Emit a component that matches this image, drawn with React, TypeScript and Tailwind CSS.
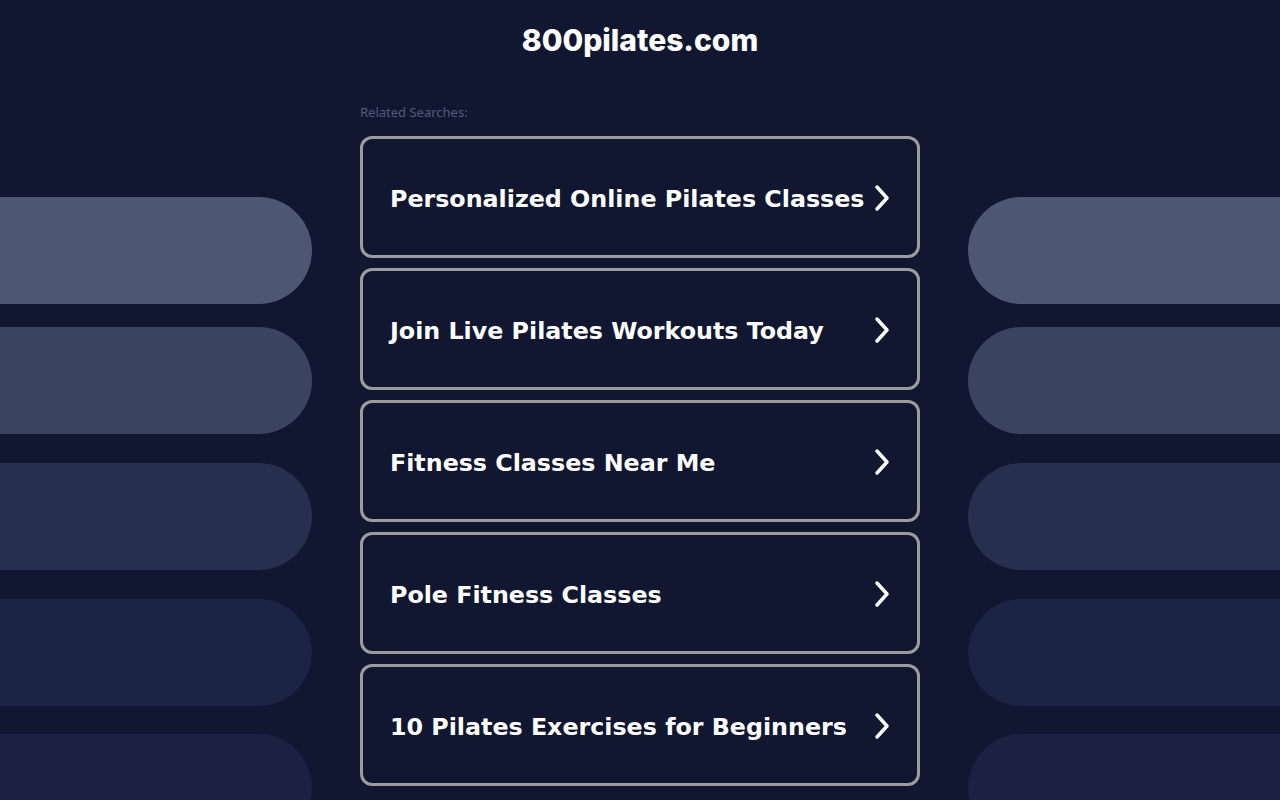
import { ReactNode } from 'react'

const searches = [
  'Personalized Online Pilates Classes',
  'Join Live Pilates Workouts Today',
  'Fitness Classes Near Me',
  'Pole Fitness Classes',
  '10 Pilates Exercises for Beginners',
]

// decorative side pills, top to bottom
const pills = [
  { bg: 'bg-[#4d5773]', mt: 'mt-[197px]' },
  { bg: 'bg-[#3a4360]', mt: 'mt-[23px]' },
  { bg: 'bg-[#262f4d]', mt: 'mt-[29px]' },
  { bg: 'bg-[#1c2445]', mt: 'mt-[29px]' },
  { bg: 'bg-[#1a2142]', mt: 'mt-[28px]' },
]

function SideColumn({ side }: { side: 'left' | 'right' }) {
  return (
    <div className="flex w-[312px] shrink-0 flex-col">
      {pills.map((p, i) => (
        <div
          key={i}
          className={`${p.mt} ${p.bg} h-[107px] w-full shrink-0 ${
            side === 'left' ? 'rounded-r-full' : 'rounded-l-full'
          }`}
        />
      ))}
    </div>
  )
}

function Chevron() {
  return (
    <svg width="20" height="30" viewBox="0 0 20 30" fill="none" className="mt-[2px] shrink-0">
      <polyline
        points="5,4 15,15 5,26"
        stroke="white"
        strokeWidth="3.5"
        strokeLinecap="round"
        strokeLinejoin="round"
      />
    </svg>
  )
}

function SearchLink({ children }: { children: ReactNode }) {
  return (
    <a
      href="#"
      className="flex h-[122px] items-center justify-between rounded-[12px] border-[3px] border-[#9c9c9c] pl-[27px] pr-[25px] text-white"
    >
      <span className="whitespace-nowrap pt-[5px] text-[23.75px] font-bold [font-family:'DejaVu_Sans',Verdana,sans-serif]">
        {children}
      </span>
      <Chevron />
    </a>
  )
}

export default function App() {
  return (
    <div className="flex h-[800px] w-full justify-between overflow-hidden bg-[#111730]">
      <SideColumn side="left" />

      <main className="flex w-[560px] shrink-0 flex-col">
        <h1 className="pt-[20px] text-center text-[30px] leading-[40px] font-extrabold text-white [font-family:Inter,'Noto_Sans',sans-serif]">
          800pilates.com
        </h1>
        <p className="mt-[43px] text-[13px] leading-[18px] text-[#515b7b] [font-family:'Noto_Sans',Arial,sans-serif]">
          Related Searches:
        </p>
        <div className="mt-[15px] flex flex-col gap-[10px]">
          {searches.map((s) => (
            <SearchLink key={s}>{s}</SearchLink>
          ))}
        </div>
      </main>

      <SideColumn side="right" />
    </div>
  )
}
